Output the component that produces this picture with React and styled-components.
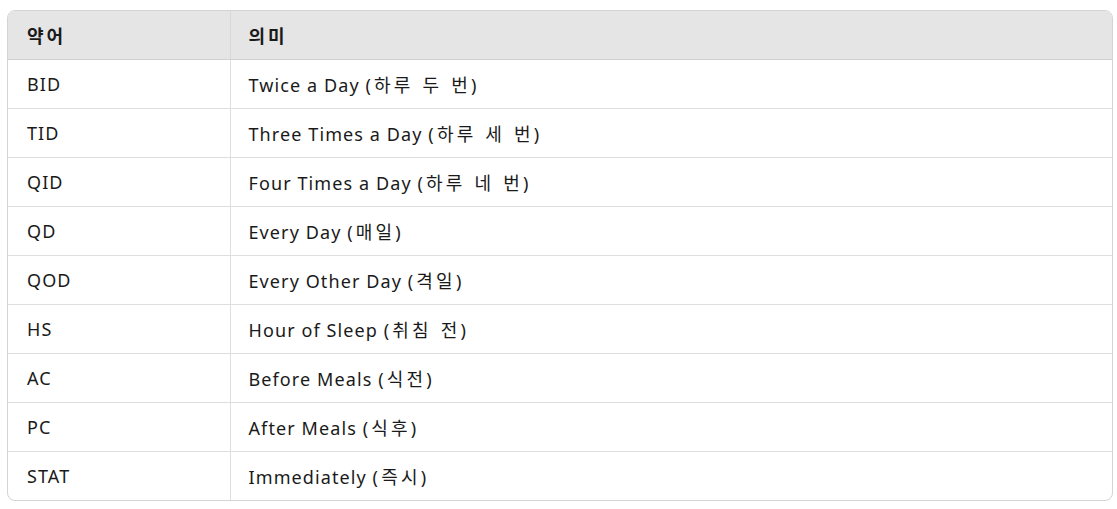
import React from "react";
import styled, { createGlobalStyle } from "styled-components";

const GlobalStyle = createGlobalStyle`
  body {
    margin: 0;
    background: #ffffff;
    font-family: "Noto Sans", "Noto Sans CJK KR", sans-serif;
  }
`

const Page = styled.div`
  padding: 10px 6px 0 7px;
`

const Frame = styled.div`
  border: 1px solid #d4d4d4;
  border-radius: 8px;
  overflow: hidden;
  width: 1104px;
`

const Table = styled.table`
  width: 100%;
  border-collapse: collapse;
  table-layout: fixed;
  font-size: 18px;
  letter-spacing: 1.1px;
  color: #1a1a1a;
`

const HeadCell = styled.th`
  box-sizing: border-box;
  background: #e5e5e5;
  height: 48px;
  text-align: left;
  font-weight: 700;
  letter-spacing: 3px;
  padding: 0 0 0 ${p => (p.$first ? "19px" : "18px")};
  border-bottom: 1px solid #d0d0d0;
  border-left: ${p => (p.$first ? "none" : "1px solid #d8d8d8")};
  width: ${p => (p.$first ? "222px" : "auto")};
`

const Row = styled.tr`
  & + & td {
    border-top: 1px solid #dedede;
  }
`

const Cell = styled.td`
  height: 48px;
  padding: 0 0 0 ${p => (p.$first ? "19px" : "18px")};
  border-left: ${p => (p.$first ? "none" : "1px solid #dedede")};
`

const Ko = styled.span`
  letter-spacing: 3.2px;
  word-spacing: 1px;
`

const rows = [
  ["BID", "Twice a Day", "하루 두 번"],
  ["TID", "Three Times a Day", "하루 세 번"],
  ["QID", "Four Times a Day", "하루 네 번"],
  ["QD", "Every Day", "매일"],
  ["QOD", "Every Other Day", "격일"],
  ["HS", "Hour of Sleep", "취침 전"],
  ["AC", "Before Meals", "식전"],
  ["PC", "After Meals", "식후"],
  ["STAT", "Immediately", "즉시"],
]

export default function App() {
  return (
    <Page>
      <GlobalStyle />
      <Frame>
        <Table>
          <thead>
            <tr>
              <HeadCell $first>약어</HeadCell>
              <HeadCell>의미</HeadCell>
            </tr>
          </thead>
          <tbody>
            {rows.map(([abbr, en, ko]) => (
              <Row key={abbr}>
                <Cell $first>{abbr}</Cell>
                <Cell>
                  {en} <Ko>({ko})</Ko>
                </Cell>
              </Row>
            ))}
          </tbody>
        </Table>
      </Frame>
    </Page>
  )
}
